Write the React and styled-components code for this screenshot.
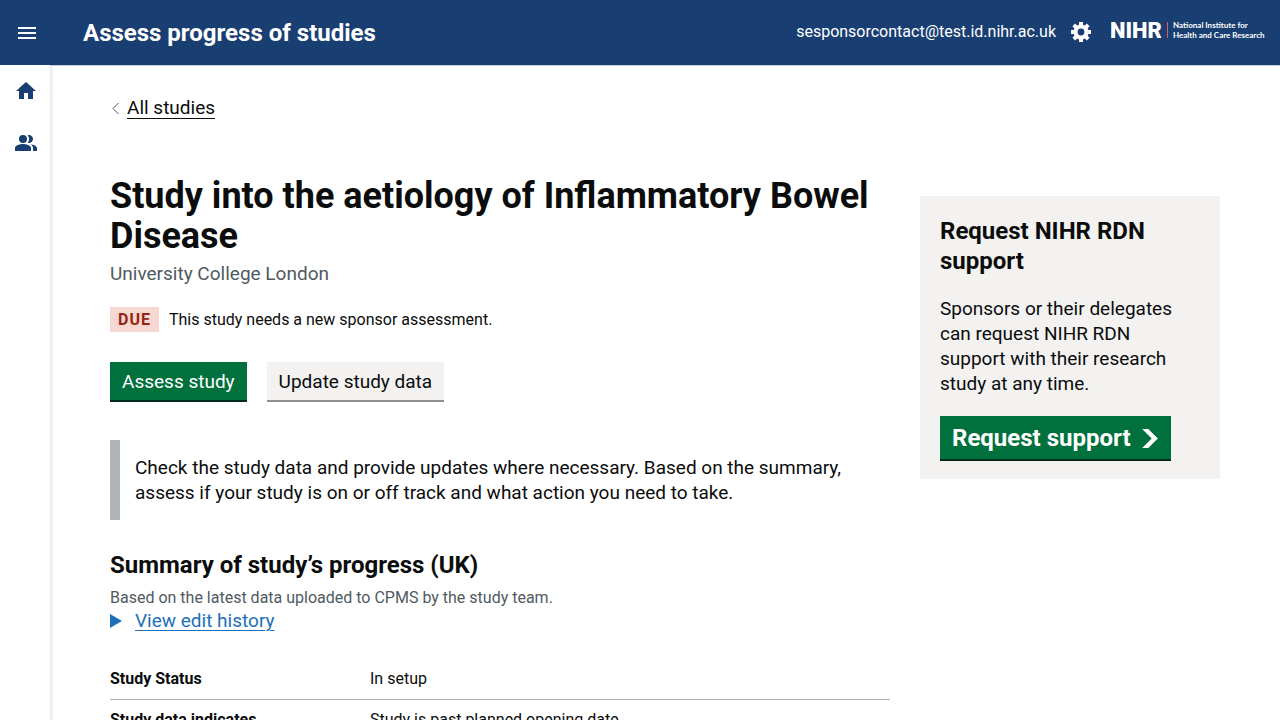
import React from 'react';
import styled, { createGlobalStyle, css } from 'styled-components';
import { MdMenu, MdHome, MdPeopleAlt } from 'react-icons/md';

const GlobalStyle = createGlobalStyle`
  *, *::before, *::after { box-sizing: border-box; }
  body {
    margin: 0;
    background: #fff;
    color: #0b0c0c;
    font-family: Roboto, "Liberation Sans", sans-serif;
    font-size: 19px;
    line-height: 25px;
  }
  h1, h2, p { margin: 0; }
  button { font: inherit; }
  svg { display: block; }
`;

const Header = styled.header`
  display: flex;
  align-items: center;
  height: 65px;
  padding: 0 15px;
  background: #193e72;
  color: #fff;
`;

const IconButton = styled.button`
  display: flex;
  padding: 0;
  border: 0;
  background: none;
  color: inherit;
  cursor: pointer;
`;

const ServiceName = styled.a`
  margin-left: 44px;
  color: inherit;
  font-size: 24px;
  line-height: 30px;
  font-weight: 700;
  text-decoration: none;
`;

const Account = styled.div`
  display: flex;
  align-items: center;
  gap: 15px;
  margin-left: auto;
  padding-bottom: 2px;
  font-size: 16px;
  line-height: 20px;
`;

const Logo = styled.a`
  display: block;
  margin-left: 5px;
  padding-bottom: 1px;
`;

const Body = styled.div`
  display: flex;
  align-items: stretch;
  min-height: calc(100vh - 65px);
`;

const SideNav = styled.nav`
  display: flex;
  flex-direction: column;
  align-items: flex-start;
  gap: 28px;
  flex: 0 0 50px;
  padding: 14px 0 0 14px;
  box-shadow: 0 0 5px rgba(0, 0, 0, 0.2);
  clip-path: inset(0 -8px 0 0);
`;

const NavLink = styled.a`
  color: #193e72;
`;

const Page = styled.div`
  flex: 1;
  min-width: 0;
  padding: 31px 60px 30px;
  box-shadow: inset 0 1px 0 #c5cfdd;
`;

const BackLink = styled.a`
  display: inline-flex;
  align-items: center;
  gap: 6px;
  color: #0b0c0c;
  text-decoration: none;

  span {
    border-bottom: 1px solid;
    line-height: 20px;
  }
`;

const Columns = styled.div`
  display: grid;
  grid-template-columns: minmax(0, 1fr) 300px;
  gap: 30px;
  align-items: start;
  margin-top: 55px;
`;

const Title = styled.h1`
  margin-bottom: 5px;
  font-size: 36px;
  line-height: 40px;
  font-weight: 700;
`;

const Heading = styled.h2`
  font-size: 24px;
  line-height: 30px;
  font-weight: 700;
`;

const Muted = styled.p`
  color: #505a5f;
  ${({ $small }) => $small && css`
    margin-top: 8px;
    font-size: 16px;
    line-height: 20px;
  `}
`;

const StatusLine = styled.div`
  display: flex;
  align-items: center;
  gap: 10px;
  margin-top: 21px;
  font-size: 16px;
`;

const Tag = styled.strong`
  padding: 0 8px;
  background: #f6d7d2;
  color: #942514;
  letter-spacing: 1px;
`;

const Actions = styled.div`
  display: flex;
  gap: 20px;
  margin-top: 30px;
`;

const Button = styled.button`
  padding: 7px 12px 6px;
  border: 0;
  border-bottom: 2px solid ${({ $secondary }) => ($secondary ? '#929191' : '#002d18')};
  background: ${({ $secondary }) => ($secondary ? '#f3f2f1' : '#00703c')};
  color: ${({ $secondary }) => ($secondary ? '#0b0c0c' : '#fff')};
  cursor: pointer;
`;

const StartButton = styled(Button)`
  display: flex;
  align-items: center;
  gap: 10px;
  margin-top: 20px;
  font-size: 24px;
  line-height: 30px;
  font-weight: 700;
`;

const Inset = styled.div`
  margin: 38px 0 30px;
  padding: 15px;
  border-left: 10px solid #b1b4b6;
`;

const HistoryToggle = styled.button`
  display: flex;
  align-items: center;
  gap: 13px;
  padding: 0;
  border: 0;
  background: none;
  color: #1d70b8;
  cursor: pointer;

  span {
    text-decoration: underline;
    text-decoration-thickness: 1px;
    text-underline-offset: 3px;
  }
`;

const SummaryTable = styled.table`
  width: 100%;
  margin-top: 26px;
  border-collapse: collapse;
  table-layout: fixed;
  font-size: 16px;
  line-height: 20px;

  th, td {
    padding: 10px 20px 10px 0;
    border-bottom: 1px solid #b1b4b6;
    text-align: left;
    vertical-align: top;
  }
  th { width: 260px; }
`;

const SupportCard = styled.aside`
  margin-top: 20px;
  padding: 20px 20px 18px;
  background: #f3f2f1;

  p { margin-top: 20px; }
`;

const rows = [
  ['Study Status', 'In setup'],
  ['Study data indicates', 'Study is past planned opening date'],
];

function GearIcon() {
  return (
    <svg width="20" height="20" viewBox="0 0 20 20" fill="currentColor" aria-hidden="true">
      <path
        fillRule="evenodd"
        d="M8 0h4v2.700l1.800.800 2-2 2.800 2.800-2 2 .800 1.700H20v4h-2.600l-.800 1.800 2 2-2.800 2.800-2-2-1.800.800V20H8v-2.600l-1.800-.800-2 2-2.800-2.800 2-2L2.600 12H0V8h2.600l.8-1.700-2-2 2.800-2.800 2 2L8 2.700zM10 6.600a3.400 3.400 0 1 0 0 6.800 3.400 3.400 0 0 0 0-6.800z"
      />
    </svg>
  );
}

function NihrLogo() {
  return (
    <svg width="154" height="20" viewBox="0 0 154 20" role="img" aria-label="NIHR National Institute for Health and Care Research">
      <g fill="#fff" fontFamily="Lato, sans-serif" fontWeight="700">
        <text x="-1" y="17" fontFamily="Roboto, sans-serif" fontSize="22" fontWeight="900">NIHR</text>
        <text x="62" y="7" fontSize="8">National Institute for</text>
        <text x="62" y="17" fontSize="8">Health and Care Research</text>
      </g>
      <path d="M56.500 1v16" stroke="#e0586a" />
    </svg>
  );
}

export default function App() {
  return (
    <>
      <GlobalStyle />
      <Header>
        <IconButton type="button" aria-label="Open menu"><MdMenu size={24} /></IconButton>
        <ServiceName href="#">Assess progress of studies</ServiceName>
        <Account>
          <span>sesponsorcontact@test.id.nihr.ac.uk</span>
          <IconButton type="button" aria-label="Settings"><GearIcon /></IconButton>
          <Logo href="#"><NihrLogo /></Logo>
        </Account>
      </Header>
      <Body>
        <SideNav aria-label="Main">
          <NavLink href="#" aria-label="Home"><MdHome size={24} /></NavLink>
          <NavLink href="#" aria-label="Contacts"><MdPeopleAlt size={24} /></NavLink>
        </SideNav>
        <Page>
          <BackLink href="#">
            <svg width="11" height="13" viewBox="0 0 11 13" fill="none" stroke="#505a5f" aria-hidden="true">
              <path d="M8.500 1L3 6.500 8.500 12" />
            </svg>
            <span>All studies</span>
          </BackLink>
          <Columns>
            <main>
              <Title>Study into the aetiology of Inflammatory Bowel Disease</Title>
              <Muted>University College London</Muted>
              <StatusLine>
                <Tag>DUE</Tag>
                <span>This study needs a new sponsor assessment.</span>
              </StatusLine>
              <Actions>
                <Button type="button">Assess study</Button>
                <Button type="button" $secondary>Update study data</Button>
              </Actions>
              <Inset>
                Check the study data and provide updates where necessary. Based on the summary,
                assess if your study is on or off track and what action you need to take.
              </Inset>
              <Heading>Summary of study’s progress (UK)</Heading>
              <Muted $small>Based on the latest data uploaded to CPMS by the study team.</Muted>
              <HistoryToggle type="button" aria-expanded="false">
                <svg width="12" height="14" viewBox="0 0 12 14" fill="currentColor" aria-hidden="true">
                  <path d="M0 0l12 7-12 7z" />
                </svg>
                <span>View edit history</span>
              </HistoryToggle>
              <SummaryTable>
                <tbody>
                  {rows.map(([label, value]) => (
                    <tr key={label}>
                      <th scope="row">{label}</th>
                      <td>{value}</td>
                    </tr>
                  ))}
                </tbody>
              </SummaryTable>
            </main>
            <SupportCard>
              <Heading>Request NIHR RDN support</Heading>
              <p>Sponsors or their delegates can request NIHR RDN support with their research study at any time.</p>
              <StartButton type="button">
                Request support
                <svg width="18" height="19" viewBox="0 0 33 40" fill="currentColor" aria-hidden="true">
                  <path d="M0 0h13l20 20-20 20H0l20-20z" />
                </svg>
              </StartButton>
            </SupportCard>
          </Columns>
        </Page>
      </Body>
    </>
  );
}
